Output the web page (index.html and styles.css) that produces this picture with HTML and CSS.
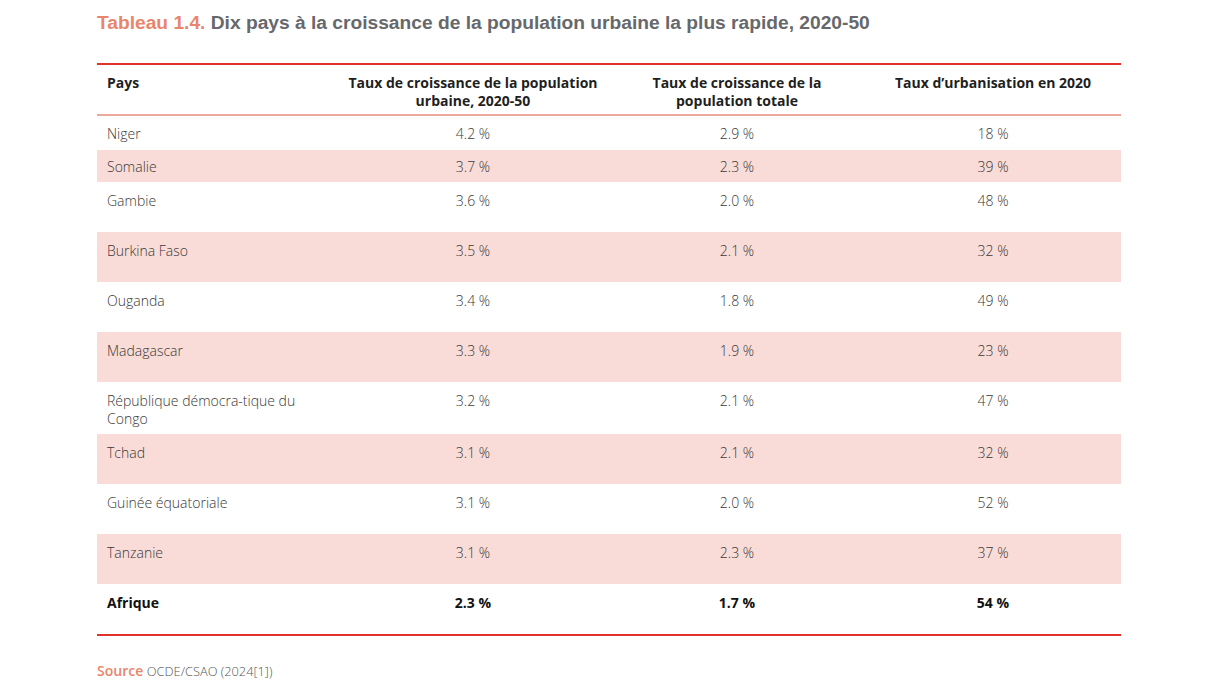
FILE: index.html
```html
<!DOCTYPE html>
<html lang="fr">
<head>
<meta charset="utf-8">
<title>Tableau 1.4</title>
<link rel="stylesheet" href="styles.css">
</head>
<body>
<main class="page">
  <h1 class="title"><span class="title-num">Tableau 1.4.</span> Dix pays à la croissance de la population urbaine la plus rapide, 2020-50</h1>
  <div class="table">
    <div class="row head">
      <div class="cell first">Pays</div>
      <div class="cell">Taux de croissance de la population urbaine, 2020-50</div>
      <div class="cell">Taux de croissance de la population totale</div>
      <div class="cell">Taux d’urbanisation en 2020</div>
    </div>
    <div class="row r1">
      <div class="cell first">Niger</div><div class="cell">4.2 %</div><div class="cell">2.9 %</div><div class="cell">18 %</div>
    </div>
    <div class="row r2 shade">
      <div class="cell first">Somalie</div><div class="cell">3.7 %</div><div class="cell">2.3 %</div><div class="cell">39 %</div>
    </div>
    <div class="row tall">
      <div class="cell first">Gambie</div><div class="cell">3.6 %</div><div class="cell">2.0 %</div><div class="cell">48 %</div>
    </div>
    <div class="row tall shade">
      <div class="cell first">Burkina Faso</div><div class="cell">3.5 %</div><div class="cell">2.1 %</div><div class="cell">32 %</div>
    </div>
    <div class="row tall">
      <div class="cell first">Ouganda</div><div class="cell">3.4 %</div><div class="cell">1.8 %</div><div class="cell">49 %</div>
    </div>
    <div class="row tall shade">
      <div class="cell first">Madagascar</div><div class="cell">3.3 %</div><div class="cell">1.9 %</div><div class="cell">23 %</div>
    </div>
    <div class="row tall">
      <div class="cell first">République démocra-tique du Congo</div><div class="cell">3.2 %</div><div class="cell">2.1 %</div><div class="cell">47 %</div>
    </div>
    <div class="row tall shade">
      <div class="cell first">Tchad</div><div class="cell">3.1 %</div><div class="cell">2.1 %</div><div class="cell">32 %</div>
    </div>
    <div class="row tall">
      <div class="cell first">Guinée équatoriale</div><div class="cell">3.1 %</div><div class="cell">2.0 %</div><div class="cell">52 %</div>
    </div>
    <div class="row tall shade">
      <div class="cell first">Tanzanie</div><div class="cell">3.1 %</div><div class="cell">2.3 %</div><div class="cell">37 %</div>
    </div>
    <div class="row tall total">
      <div class="cell first">Afrique</div><div class="cell">2.3 %</div><div class="cell">1.7 %</div><div class="cell">54 %</div>
    </div>
  </div>
  <p class="source"><span class="source-label">Source</span> <span class="source-text">OCDE/CSAO (2024[1])</span></p>
</main>
</body>
</html>
```

FILE: styles.css
```css
* { box-sizing: border-box; }
html, body { margin: 0; padding: 0; background: #ffffff; }
body { font-family: "Open Sans", "Liberation Sans", sans-serif; color: #4a4a4a; }

.page {
  width: 1216px;
  padding: 11px 95px 0 97px;
}

.title {
  margin: 0;
  font-family: "Liberation Sans", Arial, sans-serif;
  font-weight: bold;
  font-size: 19.2px;
  line-height: 24px;
  color: #66686b;
}
.title-num { color: #e8866d; }

.table {
  margin-top: 28px;
  width: 1024px;
  border-top: 2px solid #e2302a;
  border-bottom: 2px solid #e2302a;
}

.row {
  display: grid;
  grid-template-columns: 240px 272px 256px 256px;
  font-size: 14px;
  line-height: 18px;
  font-weight: 300;
  color: #383838;
}
.row.shade { background: #f9dcd7; }

.cell {
  padding: 10px 10px 6px;
  text-align: center;
}
.cell.first { text-align: left; }

.row.head {
  font-weight: 700;
  color: #1f1f1f;
  border-bottom: 2px solid #eba99d;
}
.row.head .cell { padding: 9px 10px 4px; }

.row.r1 { min-height: 34px; }
.row.r1 .cell { padding-top: 9px; padding-bottom: 5px; }
.row.r2 { min-height: 32px; }
.row.r2 .cell { padding-top: 8px; padding-bottom: 4px; }
.row.tall { min-height: 50px; }

.row.total { font-weight: 700; color: #111111; }

.source {
  margin: 25px 0 0;
  font-size: 14px;
  line-height: 20px;
  color: #6a6a6a;
}
.source-label { color: #e8866d; font-weight: 600; }
.source-text { font-size: 12.8px; font-weight: 300; color: #555555; }
```
